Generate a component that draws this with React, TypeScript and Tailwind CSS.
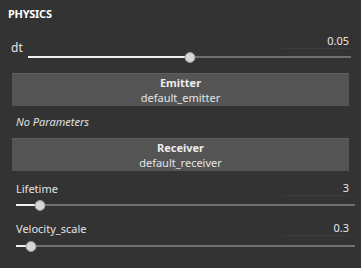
import React from "react";

const FONT = { fontFamily: '"Noto Sans", "Open Sans", sans-serif' };

function Slider({ pct }: { pct: number }) {
  return (
    <div className="relative h-[10px] flex items-center">
      <div className="w-full h-[2px] bg-[#707070]" />
      <div className="absolute left-0 h-[2px] bg-[#f2f2f2]" style={{ width: `${pct}%` }} />
      <div
        className="absolute w-[11px] h-[11px] rounded-full bg-[#d6d6d6] border border-[#9a9a9a] -translate-x-1/2"
        style={{ left: `${pct}%` }}
      />
    </div>
  );
}

function ValueBox({ value }: { value: string }) {
  return (
    <div className="w-[70px] text-right text-[11px] text-[#e8e8e8] border-b border-[#3c3c3c] leading-[14px] pr-[2px]">
      {value}
    </div>
  );
}

function Block({ title, name }: { title: string; name: string }) {
  return (
    <div className="mx-[12px] bg-[#545454] border-t border-[#5e5e5e] flex flex-col items-center h-[33px] pt-[1px]">
      <div className="text-[11px] font-bold text-[#ececec] leading-[15px]">{title}</div>
      <div className="text-[11px] text-[#e4e4e4] leading-[15px]">{name}</div>
    </div>
  );
}

export default function App() {
  return (
    <div className="w-[361px] h-[268px] bg-[#333333] text-white overflow-hidden" style={FONT}>
      <div className="pt-[7px] pl-[8px] text-[11px] font-bold tracking-tight leading-[14px]">PHYSICS</div>

      {/* dt */}
      <div className="mt-[13px] pl-[11px] pr-[10px]">
        <div className="flex justify-end">
          <ValueBox value="0.05" />
        </div>
        <div className="flex items-end -mt-[1px]">
          <span className="text-[12px] text-[#e8e8e8] leading-[14px] w-[17px] -translate-y-[7px]">dt</span>
          <div className="flex-1">
            <Slider pct={50} />
          </div>
        </div>
      </div>

      <div className="mt-[11px]">
        <Block title="Emitter" name="default_emitter" />
      </div>

      <div className="mt-[9px] pl-[16px] text-[11px] italic text-[#e0e0e0] leading-[14px]">No Parameters</div>

      <div className="mt-[9px]">
        <Block title="Receiver" name="default_receiver" />
      </div>

      {/* Lifetime */}
      <div className="mt-[10px] pl-[16px] pr-[6px]">
        <div className="flex justify-between items-end pr-[4px]">
          <span className="text-[11px] text-[#e4e4e4] leading-[14px]">Lifetime</span>
          <ValueBox value="3" />
        </div>
        <div className="mt-[4px]">
          <Slider pct={7} />
        </div>
      </div>

      {/* Velocity_scale */}
      <div className="mt-[11px] pl-[16px] pr-[6px]">
        <div className="flex justify-between items-end pr-[4px]">
          <span className="text-[11px] text-[#e4e4e4] leading-[14px]">Velocity_scale</span>
          <ValueBox value="0.3" />
        </div>
        <div className="mt-[5px]">
          <Slider pct={4.5} />
        </div>
      </div>
    </div>
  );
}
